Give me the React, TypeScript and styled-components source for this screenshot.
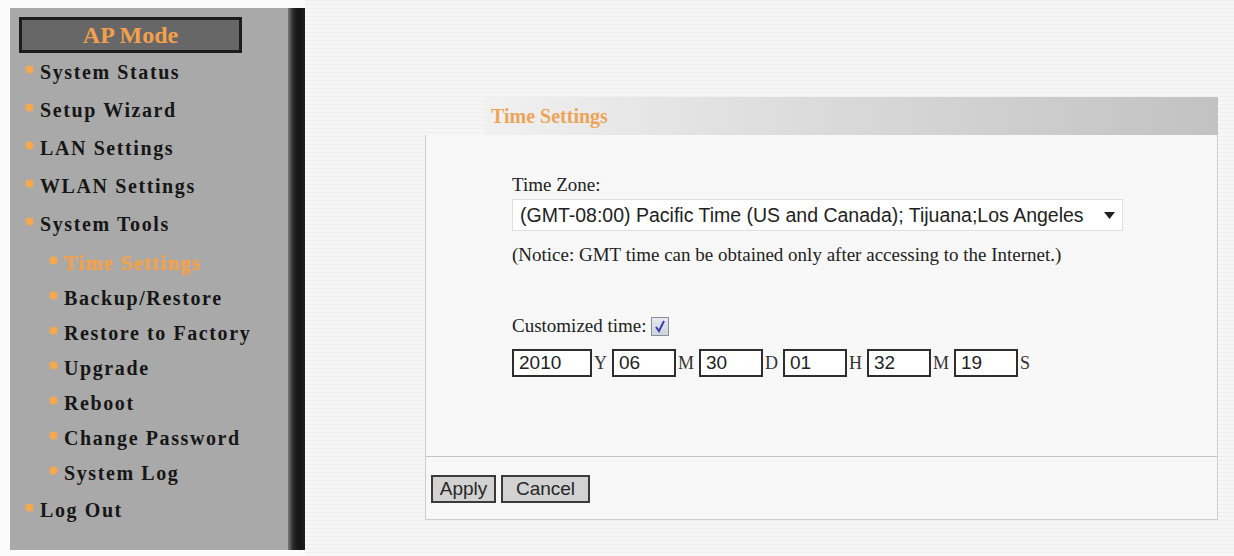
import React from "react";
import styled, { createGlobalStyle } from "styled-components";

const GlobalStyle = createGlobalStyle`
  html, body {
    margin: 0;
    padding: 0;
    background: #fbfbfb;
  }
  * {
    box-sizing: border-box;
  }
`;

const Page = styled.div`
  display: flex;
  width: 1234px;
  height: 556px;
  overflow: hidden;
  background: #fbfbfb;
`;

const Sidebar = styled.div`
  display: flex;
  width: 295px;
  height: 542px;
  margin: 8px 0 0 10px;
`;

const Menu = styled.div`
  width: 278px;
  background: #a9a9a9;
  padding: 9px 0 0 9px;
`;

const Rail = styled.div`
  width: 17px;
  background: linear-gradient(to right, #7a7a7a 0%, #2a2a2a 30%, #151515 60%, #1d1d1d 100%);
`;

const ModeBox = styled.div`
  width: 223px;
  height: 36px;
  border: 3px solid #1c1c1c;
  background: #676767;
  color: #f2a04c;
  font-family: "Liberation Serif", serif;
  font-weight: bold;
  font-size: 24px;
  line-height: 30px;
  text-align: center;
`;

const MenuItem = styled.div<{ $sub?: boolean; $active?: boolean }>`
  display: flex;
  align-items: center;
  height: ${(p) => (p.$sub ? 35 : 38)}px;
  padding-left: ${(p) => (p.$sub ? 31 : 7)}px;
  font-family: "Liberation Serif", serif;
  font-weight: bold;
  font-size: 20px;
  letter-spacing: 1.6px;
  color: ${(p) => (p.$active ? "#f2a24c" : "#161616")};
  text-shadow: ${(p) => (p.$active ? "0 0 1px #f2a24c" : "none")};
`;

const Bullet = styled.span`
  width: 7px;
  height: 7px;
  margin-right: 7px;
  border-radius: 2px;
  background: #f5a94c;
  box-shadow: 0 0 2px #f5a94c;
  transform: translateY(-3px);
  flex-shrink: 0;
`;

const SubGroup = styled.div`
  padding-top: 3px;
`;

const Content = styled.div`
  flex: 1;
  height: 556px;
  padding: 97px 0 0 120px;
  background: repeating-linear-gradient(
    0deg,
    #f6f6f6 0px,
    #f6f6f6 3px,
    #efefef 3px,
    #efefef 4px
  );
`;

const Panel = styled.div`
  width: 793px;
`;

const PanelHeader = styled.div`
  height: 38px;
  margin-left: 59px;
  padding-left: 7px;
  display: flex;
  align-items: center;
  background: linear-gradient(to right, #f1f1f1 0%, #e2e2e2 30%, #cfcfcf 70%, #c2c2c2 100%);
  color: #eda456;
  font-family: "Liberation Serif", serif;
  font-weight: bold;
  font-size: 20px;
`;

const PanelBody = styled.div`
  border: 1px solid #cdcdcd;
  border-top: none;
  background: rgba(250, 250, 250, 0.6);
`;

const FormArea = styled.div`
  height: 322px;
  padding: 39px 0 0 86px;
  border-bottom: 1px solid #c4c4c4;
`;

const Label = styled.div<{ $gap?: number }>`
  display: flex;
  align-items: center;
  margin-top: ${(p) => p.$gap || 0}px;
  font-family: "Liberation Serif", serif;
  font-size: 19px;
  line-height: 22px;
  color: #222;
`;

const Select = styled.div`
  display: flex;
  align-items: center;
  justify-content: space-between;
  width: 611px;
  height: 32px;
  margin-top: 3px;
  padding: 0 7px 0 7px;
  background: #fff;
  border: 1px solid #dedede;
  font-family: "Liberation Sans", Arial, sans-serif;
  font-size: 19.5px;
  color: #222;
`;

const Check = styled.span`
  display: inline-flex;
  align-items: center;
  justify-content: center;
  width: 18px;
  height: 19px;
  margin-left: 4px;
  border: 1px solid #8a8f9e;
  background: linear-gradient(#e6e9f0, #cdd2de);
`;

const TimeRow = styled.div`
  display: flex;
  align-items: center;
  margin-top: 12px;
`;

const Field = styled.input<{ $wide?: boolean }>`
  width: ${(p) => (p.$wide ? 80 : 64)}px;
  height: 28px;
  padding: 0 5px;
  border: 2px solid #2e2e2e;
  background: #fff;
  font-family: "Liberation Sans", Arial, sans-serif;
  font-size: 19px;
  color: #222;
  outline: none;
`;

const Unit = styled.span`
  margin: 0 5px 0 2px;
  font-family: "Liberation Serif", serif;
  font-size: 18px;
  color: #333;
`;

const ButtonBar = styled.div`
  display: flex;
  gap: 5px;
  padding: 18px 5px 16px;
`;

const Button = styled.button<{ $width: number }>`
  width: ${(p) => p.$width}px;
  height: 28px;
  padding: 0;
  border: 2px solid #3a3a3a;
  background: #d2d2d2;
  font-family: "Liberation Sans", Arial, sans-serif;
  font-size: 19px;
  color: #262626;
`;

const topItems = ["System Status", "Setup Wizard", "LAN Settings", "WLAN Settings", "System Tools"];
const subItems = [
  "Time Settings",
  "Backup/Restore",
  "Restore to Factory",
  "Upgrade",
  "Reboot",
  "Change Password",
  "System Log",
];

const timeFields = [
  { value: "2010", unit: "Y", wide: true },
  { value: "06", unit: "M" },
  { value: "30", unit: "D" },
  { value: "01", unit: "H" },
  { value: "32", unit: "M" },
  { value: "19", unit: "S" },
];

const App = () => {
  return (
    <>
      <GlobalStyle />
      <Page>
        <Sidebar>
          <Menu>
            <ModeBox>AP Mode</ModeBox>
            {topItems.map((item) => (
              <MenuItem key={item}>
                <Bullet />
                {item}
              </MenuItem>
            ))}
            <SubGroup>
              {subItems.map((item, i) => (
                <MenuItem key={item} $sub $active={i === 0}>
                  <Bullet />
                  {item}
                </MenuItem>
              ))}
            </SubGroup>
            <MenuItem>
              <Bullet />
              Log Out
            </MenuItem>
          </Menu>
          <Rail />
        </Sidebar>

        <Content>
          <Panel>
            <PanelHeader>Time Settings</PanelHeader>
            <PanelBody>
              <FormArea>
                <Label>Time Zone:</Label>
                <Select>
                  <span>(GMT-08:00) Pacific Time (US and Canada); Tijuana;Los Angeles</span>
                  <svg width="11" height="7" viewBox="0 0 11 7">
                    <path d="M0 0 L11 0 L5.5 7 Z" fill="#222" />
                  </svg>
                </Select>
                <Label $gap={13}>
                  (Notice: GMT time can be obtained only after accessing to the Internet.)
                </Label>
                <Label $gap={49}>
                  Customized time:
                  <Check>
                    <svg width="12" height="13" viewBox="0 0 12 13">
                      <path
                        d="M2 7 L5 11 L10 1"
                        fill="none"
                        stroke="#3b3fa8"
                        strokeWidth="2"
                      />
                    </svg>
                  </Check>
                </Label>
                <TimeRow>
                  {timeFields.map((f, i) => (
                    <React.Fragment key={i}>
                      <Field $wide={f.wide} defaultValue={f.value} readOnly />
                      <Unit>{f.unit}</Unit>
                    </React.Fragment>
                  ))}
                </TimeRow>
              </FormArea>
              <ButtonBar>
                <Button $width={65}>Apply</Button>
                <Button $width={89}>Cancel</Button>
              </ButtonBar>
            </PanelBody>
          </Panel>
        </Content>
      </Page>
    </>
  );
};

export default App;
